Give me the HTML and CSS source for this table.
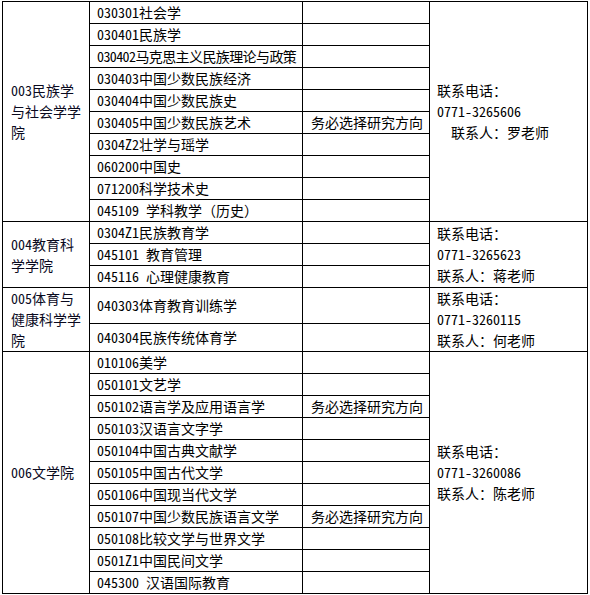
FILE: index.html
```html
<!DOCTYPE html>
<html lang="zh-CN">
<head>
<meta charset="utf-8">
<title>招生专业目录</title>
<link rel="stylesheet" href="styles.css">
</head>
<body>
<div class="sheet">
<table class="grid">
  <colgroup>
    <col class="c1"><col class="c2"><col class="c3"><col class="c4">
  </colgroup>
  <tbody>
    <tr>
      <td class="college" rowspan="10">003民族学与社会学学院</td>
      <td class="major">030301社会学</td>
      <td class="note"></td>
      <td class="contact" rowspan="10">
        <div>联系电话：</div>
        <div>0771-3265606</div>
        <div>　联系人：罗老师</div>
      </td>
    </tr>
    <tr><td class="major">030401民族学</td><td class="note"></td></tr>
    <tr><td class="major"><span class="tight">030402马克思主义民族理论与政策</span></td><td class="note"></td></tr>
    <tr><td class="major">030403中国少数民族经济</td><td class="note"></td></tr>
    <tr><td class="major">030404中国少数民族史</td><td class="note"></td></tr>
    <tr><td class="major">030405中国少数民族艺术</td><td class="note">务必选择研究方向</td></tr>
    <tr><td class="major">0304Z2壮学与瑶学</td><td class="note"></td></tr>
    <tr><td class="major">060200中国史</td><td class="note"></td></tr>
    <tr><td class="major">071200科学技术史</td><td class="note"></td></tr>
    <tr><td class="major">045109 学科教学（历史）</td><td class="note"></td></tr>

    <tr>
      <td class="college" rowspan="3">004教育科学学院</td>
      <td class="major">0304Z1民族教育学</td>
      <td class="note"></td>
      <td class="contact" rowspan="3">
        <div>联系电话：</div>
        <div>0771-3265623</div>
        <div>联系人：蒋老师</div>
      </td>
    </tr>
    <tr><td class="major">045101 教育管理</td><td class="note"></td></tr>
    <tr><td class="major">045116 心理健康教育</td><td class="note"></td></tr>

    <tr class="tall">
      <td class="college" rowspan="2">005体育与健康科学学院</td>
      <td class="major">040303体育教育训练学</td>
      <td class="note"></td>
      <td class="contact" rowspan="2">
        <div>联系电话：</div>
        <div>0771-3260115</div>
        <div>联系人：何老师</div>
      </td>
    </tr>
    <tr class="mid"><td class="major">040304民族传统体育学</td><td class="note"></td></tr>

    <tr>
      <td class="college" rowspan="11">006文学院</td>
      <td class="major">010106美学</td>
      <td class="note"></td>
      <td class="contact" rowspan="11">
        <div>联系电话：</div>
        <div>0771-3260086</div>
        <div>联系人：陈老师</div>
      </td>
    </tr>
    <tr><td class="major">050101文艺学</td><td class="note"></td></tr>
    <tr><td class="major">050102语言学及应用语言学</td><td class="note">务必选择研究方向</td></tr>
    <tr><td class="major">050103汉语言文字学</td><td class="note"></td></tr>
    <tr><td class="major">050104中国古典文献学</td><td class="note"></td></tr>
    <tr><td class="major">050105中国古代文学</td><td class="note"></td></tr>
    <tr><td class="major">050106中国现当代文学</td><td class="note"></td></tr>
    <tr><td class="major">050107中国少数民族语言文学</td><td class="note">务必选择研究方向</td></tr>
    <tr><td class="major">050108比较文学与世界文学</td><td class="note"></td></tr>
    <tr><td class="major">0501Z1中国民间文学</td><td class="note"></td></tr>
    <tr><td class="major">045300 汉语国际教育</td><td class="note"></td></tr>
  </tbody>
</table>
</div>
</body>
</html>
```
FILE: styles.css
```css
html, body {
  margin: 0;
  padding: 0;
  background: #ffffff;
}

body {
  font-family: "Noto Sans Mono CJK SC", "Noto Sans CJK SC", monospace;
  font-size: 14px;
  color: #000000;
}

.sheet {
  padding: 1px 0 0 2px;
}

.grid {
  border-collapse: collapse;
  table-layout: fixed;
  width: 585px;
}

.c1 { width: 87px; }
.c2 { width: 213px; }
.c3 { width: 127px; }
.c4 { width: 158px; }

.grid td {
  border: 1px solid #000000;
  padding: 0 7px;
  height: 21px;
  line-height: 21px;
  vertical-align: middle;
  white-space: nowrap;
  overflow: hidden;
}

.tight {
  letter-spacing: -0.6px;
}

.grid td.college {
  white-space: normal;
  padding: 0 6px 0 8px;
  color: #0a0a1e;
}

.grid td.note {
  padding-left: 8px;
}

.grid td.contact {
  padding-left: 7px;
}

.grid tr.tall td {
  height: 35px;
}

.grid tr.mid td {
  height: 27px;
}
```
